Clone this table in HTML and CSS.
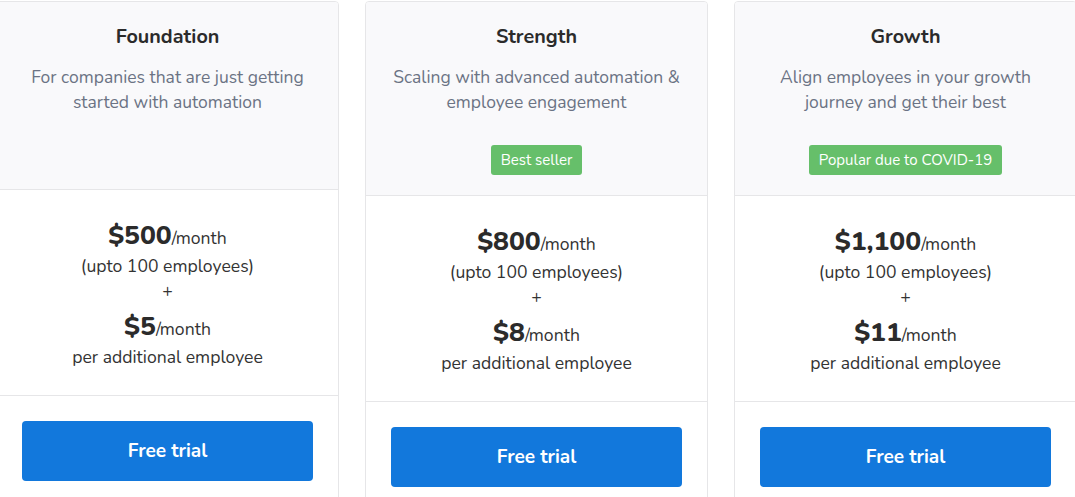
FILE: index.html
```html
<!DOCTYPE html>
<html>
<head>
<meta charset="utf-8">
<link rel="stylesheet" href="styles.css">
</head>
<body>
<div class="plans">
  <div class="card">
    <div class="head head-short">
      <div class="title">Foundation</div>
      <div class="desc">For companies that are just getting started with automation</div>
    </div>
    <div class="price">
      <div class="amount"><b>$500</b>/month</div>
      <div class="line">(upto 100 employees)</div>
      <div class="line plus">+</div>
      <div class="amount"><b>$5</b>/month</div>
      <div class="line">per additional employee</div>
    </div>
    <div class="foot"><button class="btn">Free trial</button></div>
  </div>
  <div class="card">
    <div class="head">
      <div class="title">Strength</div>
      <div class="desc">Scaling with advanced automation &amp; employee engagement</div>
      <span class="badge">Best seller</span>
    </div>
    <div class="price">
      <div class="amount"><b>$800</b>/month</div>
      <div class="line">(upto 100 employees)</div>
      <div class="line plus">+</div>
      <div class="amount"><b>$8</b>/month</div>
      <div class="line">per additional employee</div>
    </div>
    <div class="foot"><button class="btn">Free trial</button></div>
  </div>
  <div class="card">
    <div class="head">
      <div class="title">Growth</div>
      <div class="desc">Align employees in your growth journey and get their best</div>
      <span class="badge">Popular due to COVID-19</span>
    </div>
    <div class="price">
      <div class="amount"><b>$1,100</b>/month</div>
      <div class="line">(upto 100 employees)</div>
      <div class="line plus">+</div>
      <div class="amount"><b>$11</b>/month</div>
      <div class="line">per additional employee</div>
    </div>
    <div class="foot"><button class="btn">Free trial</button></div>
  </div>
</div>
</body>
</html>
```
FILE: styles.css
```css
html, body {
  margin: 0;
  padding: 0;
  background: #ffffff;
  overflow: hidden;
}
body {
  font-family: "Nunito", Lato, "Open Sans", sans-serif;
  color: #333333;
}
.plans {
  display: flex;
  gap: 26px;
  margin-left: -4px;
  padding-top: 1px;
}
.card {
  flex: 0 0 343px;
  box-sizing: border-box;
  width: 343px;
  border: 1px solid #e6e6e8;
  border-radius: 4px 4px 0 0;
  overflow: hidden;
}
.head {
  background: #f9f9fb;
  box-sizing: border-box;
  height: 194px;
  padding: 23px 20px 0;
  display: flex;
  flex-direction: column;
  align-items: center;
  text-align: center;
  border-bottom: 1px solid #e6e6e8;
}
.head-short {
  height: 188px;
}
.title {
  font-size: 19.8px;
  font-weight: 700;
  line-height: 24px;
  color: #2b2b2b;
}
.desc {
  margin-top: 16px;
  font-size: 17.5px;
  line-height: 25px;
  color: #6b7384;
}
.badge {
  margin-top: 30px;
  background: #66bf6a;
  color: #ffffff;
  font-size: 15px;
  line-height: 30px;
  height: 30px;
  padding: 0 10px;
  border-radius: 3px;
}
.price {
  box-sizing: border-box;
  height: 206px;
  padding-top: 27px;
  text-align: center;
  border-bottom: 1px solid #e6e6e8;
}
.amount {
  height: 37px;
  font-size: 17.6px;
  line-height: 37px;
  color: #333333;
}
.amount b {
  font-size: 26.5px;
  font-weight: 800;
  color: #2b2b2b;
}
.line {
  font-size: 17.6px;
  line-height: 25px;
  color: #333333;
}
.plus {
  margin-bottom: 4px;
}
.foot {
  padding: 25px 25px 30px;
}
.btn {
  display: block;
  width: 100%;
  height: 60px;
  border: none;
  border-radius: 4px;
  background: #1278dc;
  color: #ffffff;
  font-family: inherit;
  font-size: 19px;
  font-weight: 700;
}
```
